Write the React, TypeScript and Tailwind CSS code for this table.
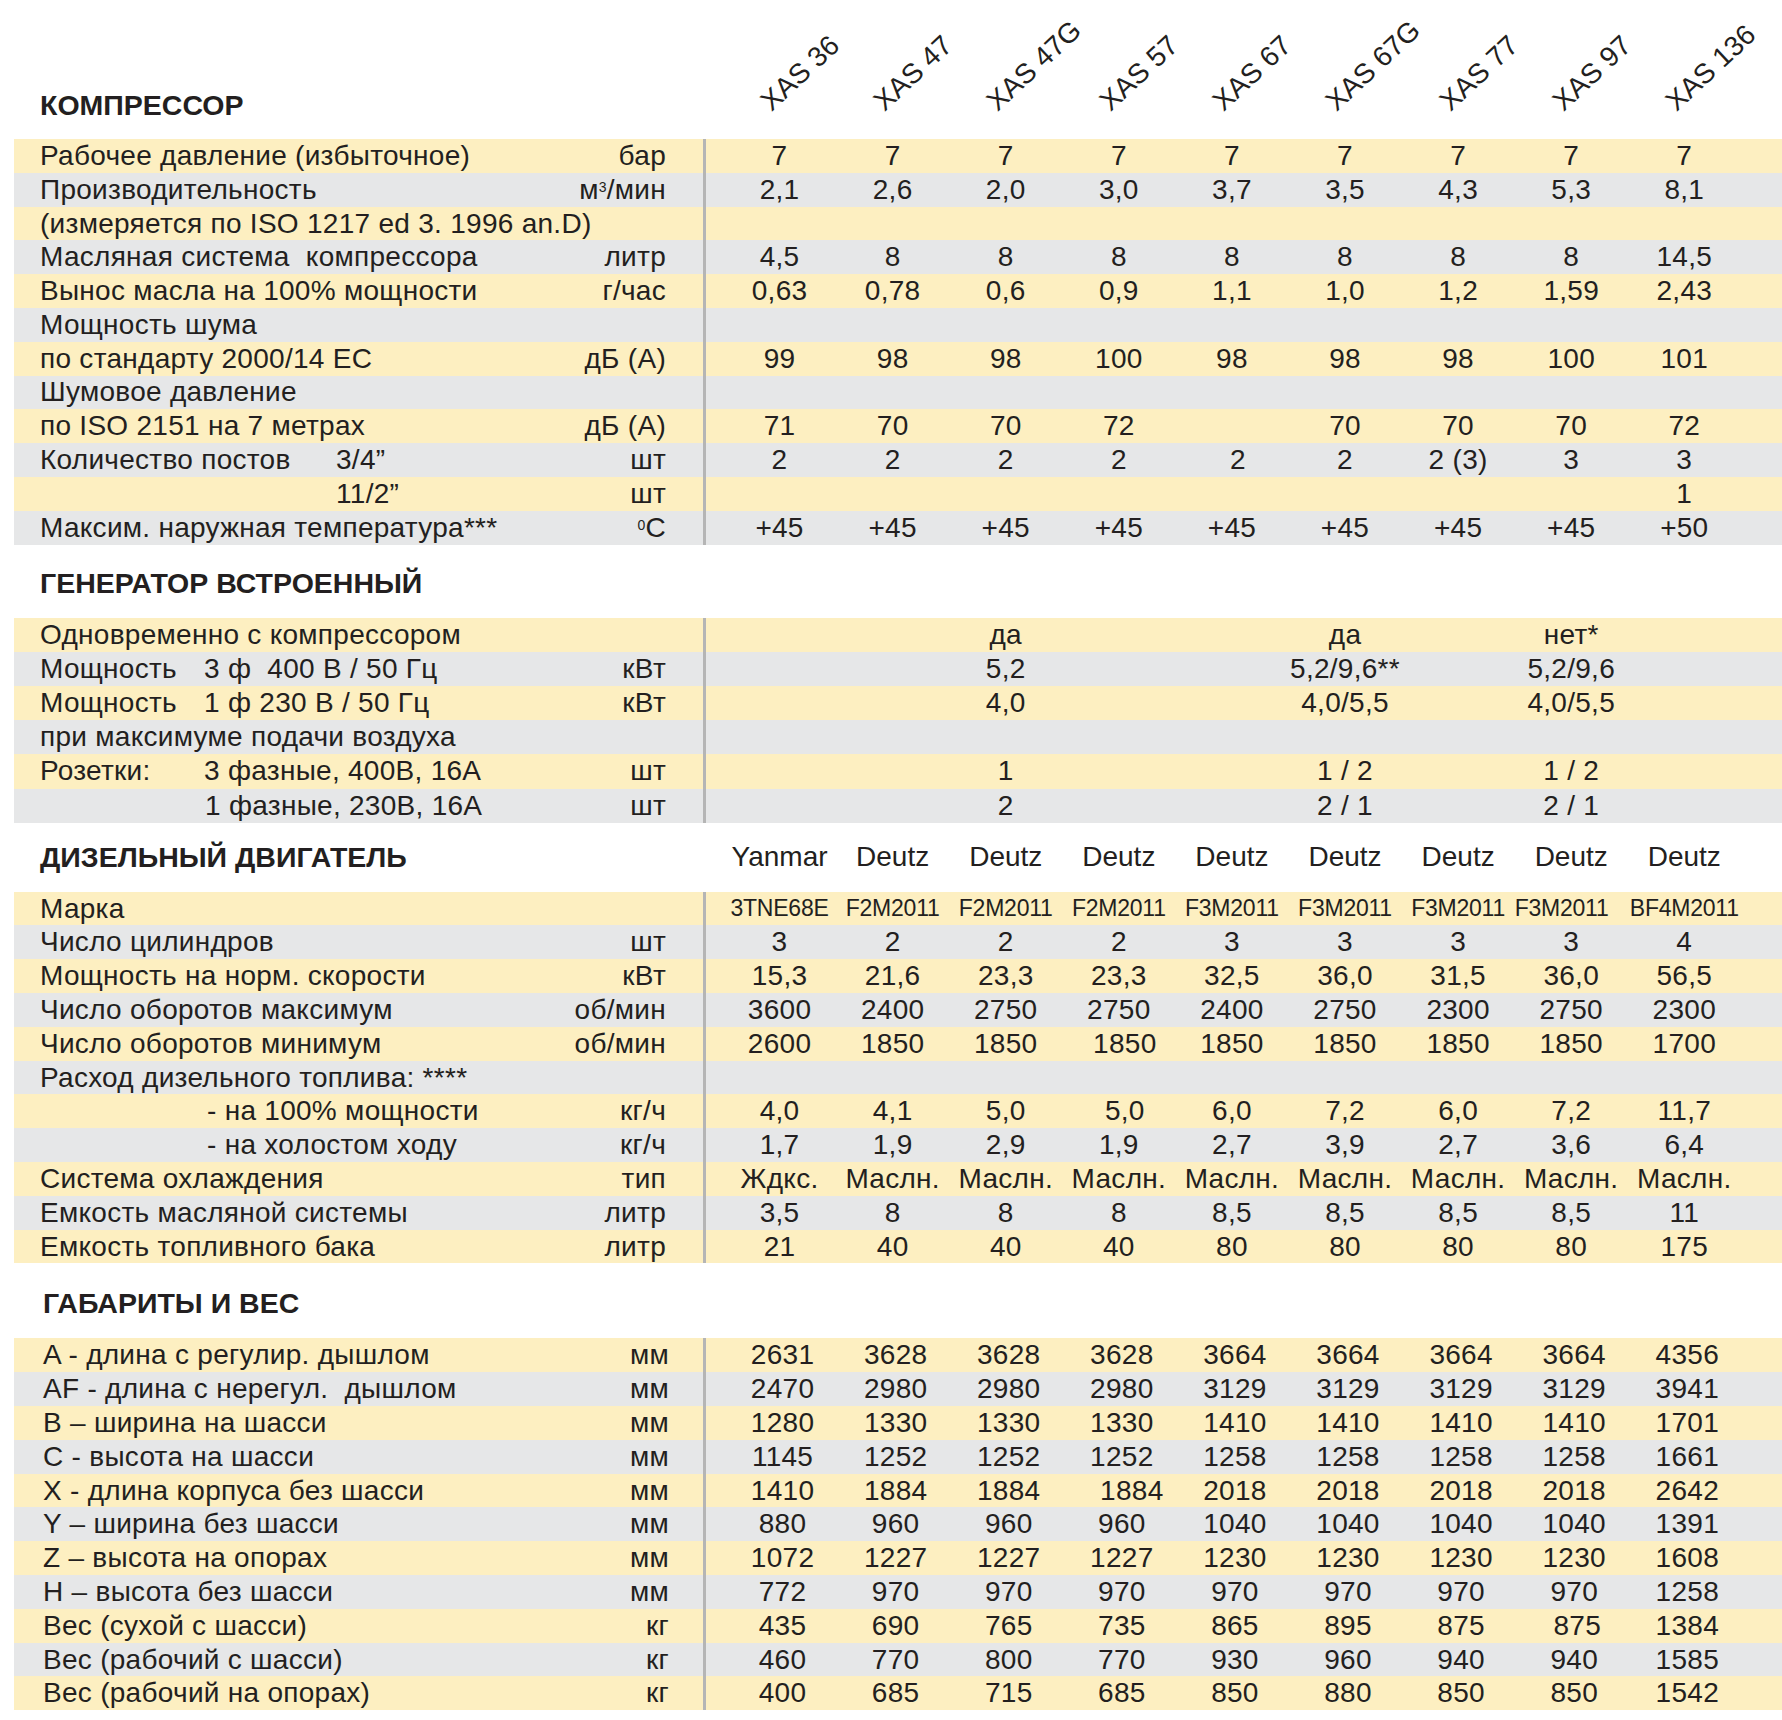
import React from "react";

// Cell may carry an extra class to nudge it (as in the printed sheet)
type Cell = string | { t: string; cls: string };

interface Row {
  label: React.ReactNode;
  unit?: React.ReactNode;
  values?: Cell[];
  small?: boolean;
}

const models = ["XAS 36", "XAS 47", "XAS 47G", "XAS 57", "XAS 67", "XAS 67G", "XAS 77", "XAS 97", "XAS 136"];

const e = "";

const compressorRows: Row[] = [
  { label: "Рабочее давление (избыточное)", unit: "бар", values: ["7", "7", "7", "7", "7", "7", "7", "7", "7"] },
  {
    label: "Производительность",
    unit: (
      <>
        м<sup className="text-[14px]">3</sup>/мин
      </>
    ),
    values: ["2,1", "2,6", "2,0", "3,0", "3,7", "3,5", "4,3", "5,3", "8,1"],
  },
  { label: "(измеряется по ISO 1217 ed 3. 1996 an.D)" },
  { label: "Масляная система  компрессора", unit: "литр", values: ["4,5", "8", "8", "8", "8", "8", "8", "8", "14,5"] },
  { label: "Вынос масла на 100% мощности", unit: "г/час", values: ["0,63", "0,78", "0,6", "0,9", "1,1", "1,0", "1,2", "1,59", "2,43"] },
  { label: "Мощность шума" },
  { label: "по стандарту 2000/14 EC", unit: "дБ (А)", values: ["99", "98", "98", "100", "98", "98", "98", "100", "101"] },
  { label: "Шумовое давление" },
  { label: "по ISO 2151 на 7 метрах", unit: "дБ (А)", values: ["71", "70", "70", "72", e, "70", "70", "70", "72"] },
  {
    label: (
      <>
        <span className="w-[296px]">Количество постов</span>
        <span>3/4”</span>
      </>
    ),
    unit: "шт",
    values: ["2", "2", "2", "2", { t: "2", cls: "pl-[12px]" }, "2", "2 (3)", "3", "3"],
  },
  { label: <span className="pl-[296px]">11/2”</span>, unit: "шт", values: [e, e, e, e, e, e, e, e, "1"] },
  {
    label: "Максим. наружная температура***",
    unit: (
      <>
        <sup className="text-[14px]">0</sup>C
      </>
    ),
    values: ["+45", "+45", "+45", "+45", "+45", "+45", "+45", "+45", "+50"],
  },
];

const generatorRows: Row[] = [
  { label: "Одновременно с компрессором", values: [e, e, "да", e, e, "да", e, "нет*", e] },
  {
    label: (
      <>
        <span className="w-[164px]">Мощность</span>
        <span>3 ф&nbsp; 400 В / 50 Гц</span>
      </>
    ),
    unit: "кВт",
    values: [e, e, "5,2", e, e, "5,2/9,6**", e, "5,2/9,6", e],
  },
  {
    label: (
      <>
        <span className="w-[164px]">Мощность</span>
        <span>1 ф 230 В / 50 Гц</span>
      </>
    ),
    unit: "кВт",
    values: [e, e, "4,0", e, e, "4,0/5,5", e, "4,0/5,5", e],
  },
  { label: "при максимуме подачи воздуха" },
  {
    label: (
      <>
        <span className="w-[164px]">Розетки:</span>
        <span>3 фазные, 400В, 16А</span>
      </>
    ),
    unit: "шт",
    values: [e, e, "1", e, e, "1 / 2", e, "1 / 2", e],
  },
  { label: <span className="pl-[165px]">1 фазные, 230В, 16А</span>, unit: "шт", values: [e, e, "2", e, e, "2 / 1", e, "2 / 1", e] },
];

const engineRows: Row[] = [
  {
    label: "Марка",
    small: true,
    values: [
      "3TNE68E",
      "F2M2011",
      "F2M2011",
      "F2M2011",
      "F3M2011",
      "F3M2011",
      "F3M2011",
      { t: "F3M2011", cls: "pr-[26px]" },
      "BF4M2011",
    ],
  },
  { label: "Число цилиндров", unit: "шт", values: ["3", "2", "2", "2", "3", "3", "3", "3", "4"] },
  { label: "Мощность на норм. скорости", unit: "кВт", values: ["15,3", "21,6", "23,3", "23,3", "32,5", "36,0", "31,5", "36,0", "56,5"] },
  { label: "Число оборотов максимум", unit: "об/мин", values: ["3600", "2400", "2750", "2750", "2400", "2750", "2300", "2750", "2300"] },
  {
    label: "Число оборотов минимум",
    unit: "об/мин",
    values: ["2600", "1850", "1850", { t: "1850", cls: "pl-[12px]" }, "1850", "1850", "1850", "1850", "1700"],
  },
  { label: "Расход дизельного топлива: ****" },
  {
    label: <span className="pl-[167px]">- на 100% мощности</span>,
    unit: "кг/ч",
    values: ["4,0", "4,1", "5,0", { t: "5,0", cls: "pl-[12px]" }, "6,0", "7,2", "6,0", "7,2", "11,7"],
  },
  { label: <span className="pl-[167px]">- на холостом ходу</span>, unit: "кг/ч", values: ["1,7", "1,9", "2,9", "1,9", "2,7", "3,9", "2,7", "3,6", "6,4"] },
  { label: "Система охлаждения", unit: "тип", values: ["Ждкс.", "Маслн.", "Маслн.", "Маслн.", "Маслн.", "Маслн.", "Маслн.", "Маслн.", "Маслн."] },
  { label: "Емкость масляной системы", unit: "литр", values: ["3,5", "8", "8", "8", "8,5", "8,5", "8,5", "8,5", "11"] },
  { label: "Емкость топливного бака", unit: "литр", values: ["21", "40", "40", "40", "80", "80", "80", "80", "175"] },
];

const dimensionRows: Row[] = [
  { label: "A - длина с регулир. дышлом", unit: "мм", values: ["2631", "3628", "3628", "3628", "3664", "3664", "3664", "3664", "4356"] },
  { label: "AF - длина с нерегул.  дышлом", unit: "мм", values: ["2470", "2980", "2980", "2980", "3129", "3129", "3129", "3129", "3941"] },
  { label: "B – ширина на шасси", unit: "мм", values: ["1280", "1330", "1330", "1330", "1410", "1410", "1410", "1410", "1701"] },
  { label: "C - высота на шасси", unit: "мм", values: ["1145", "1252", "1252", "1252", "1258", "1258", "1258", "1258", "1661"] },
  {
    label: "X - длина корпуса без шасси",
    unit: "мм",
    values: ["1410", "1884", "1884", { t: "1884", cls: "pl-[20px]" }, "2018", "2018", "2018", "2018", "2642"],
  },
  { label: "Y – ширина без шасси", unit: "мм", values: ["880", "960", "960", "960", "1040", "1040", "1040", "1040", "1391"] },
  { label: "Z – высота на опорах", unit: "мм", values: ["1072", "1227", "1227", "1227", "1230", "1230", "1230", "1230", "1608"] },
  { label: "H – высота без шасси", unit: "мм", values: ["772", "970", "970", "970", "970", "970", "970", "970", "1258"] },
  {
    label: "Вес (сухой с шасси)",
    unit: "кг",
    values: ["435", "690", "765", "735", "865", "895", "875", { t: "875", cls: "pl-[6px]" }, "1384"],
  },
  { label: "Вес (рабочий с шасси)", unit: "кг", values: ["460", "770", "800", "770", "930", "960", "940", "940", "1585"] },
  { label: "Вес (рабочий на опорах)", unit: "кг", values: ["400", "685", "715", "685", "850", "880", "850", "850", "1542"] },
];

function ValueCell({ cell, small }: { cell: Cell; small?: boolean }) {
  const text = typeof cell === "string" ? cell : cell.t;
  const extra = typeof cell === "string" ? "" : cell.cls;
  return (
    <div
      className={`w-[113.1px] shrink-0 whitespace-nowrap text-center ${
        small ? "text-[23px] tracking-[-0.01em]" : "text-[28px] tracking-[0.01em]"
      } ${extra}`}
    >
      {text}
    </div>
  );
}

function TableRow({ row, index, dims, tall }: { row: Row; index: number; dims?: boolean; tall?: boolean }) {
  const bg = index % 2 === 0 ? "bg-[#fdefc1]" : "bg-[#e6e7e8]";
  return (
    <div className={`flex items-center ${bg} ${tall ? "h-[34.2px]" : "h-[33.8px]"}`}>
      <div
        className={`flex w-[689px] shrink-0 items-center justify-between text-[28px] tracking-[0.01em] ${
          dims ? "pl-[29px] pr-[34px]" : "pl-[26px] pr-[37px]"
        }`}
      >
        <div className="flex whitespace-pre">{row.label}</div>
        <div className="whitespace-nowrap">{row.unit}</div>
      </div>
      <div className="w-[3px] shrink-0 self-stretch bg-[#b5b5b5]" />
      <div className={`${dims ? "w-[20px]" : "w-[17px]"} shrink-0`} />
      {row.values?.map((v, i) => <ValueCell key={i} cell={v} small={row.small} />)}
    </div>
  );
}

function Section({ rows, dims, tall }: { rows: Row[]; dims?: boolean; tall?: boolean }) {
  return (
    <div className="flex flex-col">
      {rows.map((r, i) => (
        <TableRow key={i} row={r} index={i} dims={dims} tall={tall} />
      ))}
    </div>
  );
}

function SectionTitle({
  title,
  height,
  brands,
  dims,
}: {
  title: string;
  height: string;
  brands?: string[];
  dims?: boolean;
}) {
  return (
    <div className={`flex items-center ${height}`}>
      <div className={`w-[709px] shrink-0 text-[28.5px] font-bold leading-none ${dims ? "pl-[29px]" : "pl-[26px]"}`}>
        {title}
      </div>
      {brands?.map((b, i) => (
        <div key={i} className="w-[113.1px] shrink-0 text-center text-[28px] leading-none">
          {b}
        </div>
      ))}
    </div>
  );
}

export default function App() {
  return (
    <div className="min-h-[1720px] w-[1782px] bg-white font-['Liberation_Sans',Arial,Helvetica,sans-serif] text-[#231f20]">
      <div className="ml-[14px] flex flex-col">
        {/* Model headings */}
        <div className="flex h-[139px]">
          <div className="flex w-[709px] shrink-0 items-end pb-[20px] pl-[26px] text-[28.5px] font-bold leading-none">
            КОМПРЕССОР
          </div>
          {models.map((m) => (
            <div key={m} className="flex w-[113.1px] shrink-0 items-end pb-[23px] pl-[52px]">
              <span className="inline-block origin-bottom-left -rotate-[43deg] whitespace-nowrap text-[28px] leading-none">
                {m}
              </span>
            </div>
          ))}
        </div>
        <Section rows={compressorRows} />

        <SectionTitle title="ГЕНЕРАТОР ВСТРОЕННЫЙ" height="h-[73px] pt-[4px]" />
        <Section rows={generatorRows} tall />

        <SectionTitle
          title="ДИЗЕЛЬНЫЙ ДВИГАТЕЛЬ"
          height="h-[69px] pt-[0px]"
          brands={["Yanmar", "Deutz", "Deutz", "Deutz", "Deutz", "Deutz", "Deutz", "Deutz", "Deutz"]}
        />
        <Section rows={engineRows} />

        <SectionTitle title="ГАБАРИТЫ И ВЕС" height="h-[75px] pt-[4px]" dims />
        <Section rows={dimensionRows} dims />
      </div>
    </div>
  );
}
